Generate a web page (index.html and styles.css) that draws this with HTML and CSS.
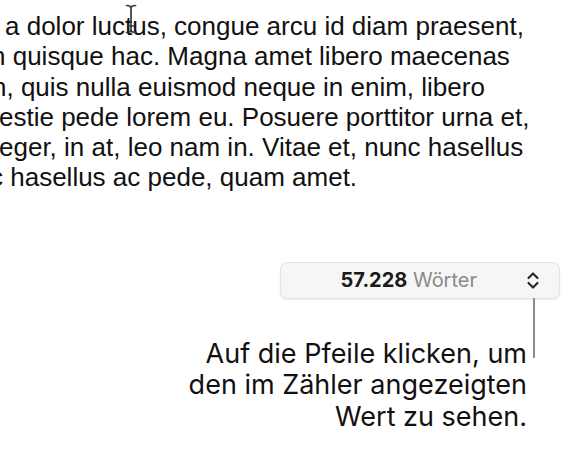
FILE: index.html
```html
<!DOCTYPE html>
<html lang="de">
<head>
<meta charset="utf-8">
<link rel="stylesheet" href="styles.css">
</head>
<body>
<div class="page">
  <div class="doc">
    <div class="line l1">a dolor luctus, congue arcu id diam praesent,</div>
    <div class="line l2">n quisque hac. Magna amet libero maecenas</div>
    <div class="line l3">n, quis nulla euismod neque in enim, libero</div>
    <div class="line l4">estie pede lorem eu. Posuere porttitor urna et,</div>
    <div class="line l5">eger, in at, leo nam in. Vitae et, nunc hasellus</div>
    <div class="line l6">c hasellus ac pede, quam amet.</div>
    <svg class="ibeam" width="12" height="30" viewBox="0 0 12 30">
      <path d="M1.5 1.5 Q6 1.5 6 4.5 Q6 1.5 10.5 1.5 M6 4.5 V25.5 Q6 28.5 1.5 28.5 M6 25.5 Q6 28.5 10.5 28.5 M3.5 22 H8.5" fill="none" stroke="#3a3a3a" stroke-width="1.7" stroke-linecap="round"/>
    </svg>
  </div>
  <div class="annot">
    <div class="stepper-row">
      <div class="stepper">
        <span class="count"><b>57.228</b> <span class="unit">Wörter</span></span>
        <svg class="chev" width="14" height="19" viewBox="0 0 14 19">
          <path d="M2.5 7 L7 2.5 L11.5 7 M2.5 12 L7 16.5 L11.5 12" fill="none" stroke="#2a2a2a" stroke-width="2.2" stroke-linecap="round" stroke-linejoin="round"/>
        </svg>
      </div>
    </div>
    <div class="leader"></div>
    <div class="callout">Auf die Pfeile klicken, um<br>den im Zähler angezeigten<br>Wert zu sehen.</div>
  </div>
</div>
</body>
</html>
```
FILE: styles.css
```css
html, body {
  margin: 0;
  padding: 0;
  background: #ffffff;
}
.page {
  width: 577px;
  height: 451px;
  overflow: hidden;
  position: relative;
}
.doc {
  position: relative;
  padding-top: 11px;
  font-family: "Liberation Sans", Arial, sans-serif;
  font-size: 26px;
  line-height: 30.3px;
  color: #111;
}
.line {
  white-space: pre;
}
.l1 { margin-left: 5px; }
.l2 { margin-left: -9px; }
.l3 { margin-left: -8px; }
.l4 { margin-left: -1px; }
.l5 { margin-left: -1px; }
.l6 { margin-left: -10px; }
.ibeam {
  position: absolute;
  left: 125px;
  top: 4px;
}
.annot {
  position: relative;
  margin-top: 69px;
}
.stepper-row {
  display: flex;
  justify-content: flex-end;
  padding-right: 17px;
}
.stepper {
  width: 280px;
  height: 37px;
  box-sizing: border-box;
  border: 1px solid #e3e3e3;
  border-radius: 7px;
  background: #f6f6f6;
  box-shadow: 0 1px 2px rgba(0,0,0,0.08);
  display: flex;
  align-items: center;
  justify-content: flex-end;
  padding-right: 19px;
  font-family: "Inter", "Liberation Sans", sans-serif;
  font-size: 20px;
}
.count {
  margin-right: 49px;
  color: #1a1a1a;
}
.count b {
  font-weight: 700;
}
.unit {
  color: #8a8a8a;
}
.leader {
  position: absolute;
  left: 533px;
  top: 36px;
  width: 2px;
  height: 60px;
  background: #8c8c8c;
}
.callout {
  margin-top: 39px;
  padding-right: 50px;
  text-align: right;
  font-family: "Inter", "Liberation Sans", sans-serif;
  font-size: 27px;
  line-height: 31.5px;
  color: #111;
}
```
